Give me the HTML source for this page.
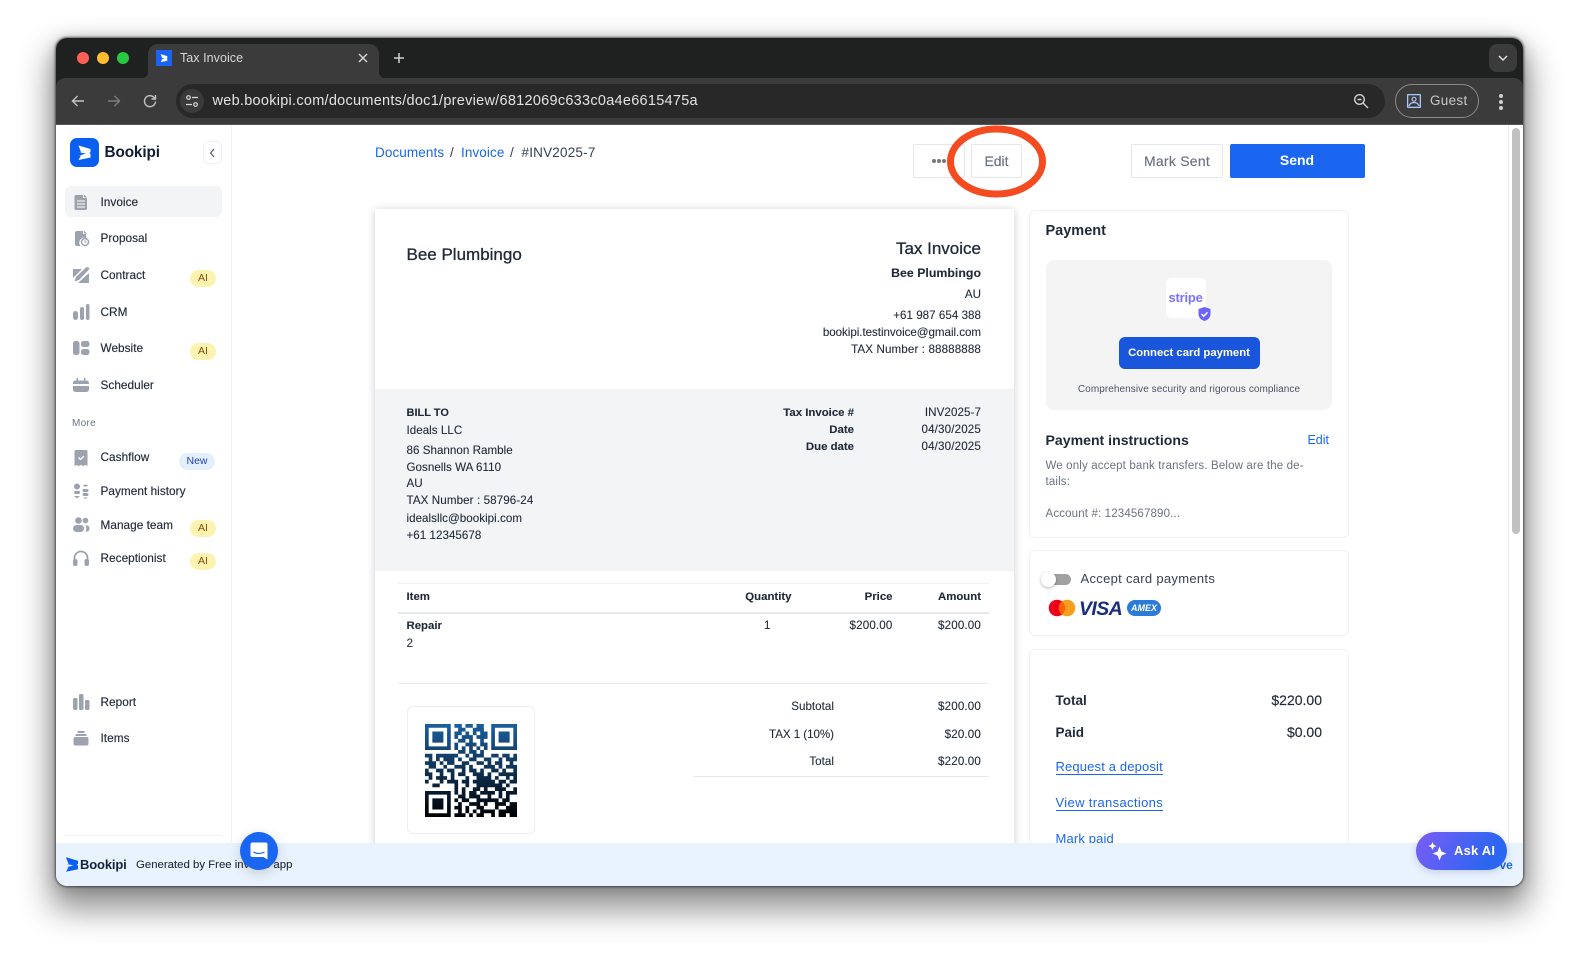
<!DOCTYPE html>
<html><head><meta charset="utf-8"><title>Tax Invoice</title>
<style>
*{box-sizing:border-box}
html,body{margin:0;padding:0;width:1579px;height:960px;overflow:hidden;background:#fff;font-family:"Liberation Sans",sans-serif}
.a{position:absolute}
.t{position:absolute;white-space:nowrap;line-height:20px;height:20px}
.win{position:absolute;left:56px;top:38px;width:1467px;height:848px;border-radius:11px;background:#fff;box-shadow:0 0 2px 1px rgba(0,0,0,.55),0 18px 32px 6px rgba(0,0,0,.42),0 2px 16px rgba(0,0,0,.2)}
#v{position:absolute;left:0;top:0;width:1579px;height:960px;overflow:hidden}
.n{font-size:11.8px;color:#1f2937;left:100.5px;letter-spacing:.03px;-webkit-text-stroke:.15px #1f2937}
.ic{position:absolute;left:72px;width:18px;height:18px;fill:#9ca3af}
.bd{position:absolute;height:17px;border-radius:9px;font-size:10.5px;line-height:17px;text-align:center}
.ai{left:190px;width:26px;background:#fdf3b0;color:#854d0e}
.p{font-size:11.6px;color:#1f2937;letter-spacing:.03px;-webkit-text-stroke:.1px #1f2937;margin-top:.8px}
.b{font-size:11.4px;font-weight:700;letter-spacing:0}
.ra{text-align:right}
.btn{position:absolute;border:1px solid #e5e7eb;border-radius:2px;background:#fff;color:#6b7280;font-size:14px;text-align:center;line-height:33px;-webkit-text-stroke:.15px #6b7280}
.card{position:absolute;left:1029px;width:320px;background:#fff;border:1px solid #f0f1f3;border-radius:6px}
.lnk{font-size:13px;color:#1a66f0;letter-spacing:.15px;border-bottom:1px solid #1a66f0;height:16px;line-height:15px}
.m{font-size:11.5px;color:#6b7280;letter-spacing:.15px}
</style></head><body>
<div id="v">
<div class="win"></div>

<!-- browser chrome -->
<div class="a" style="left:56px;top:38px;width:1467px;height:60px;background:#1f2020;border-radius:11px 11px 0 0"></div>
<div class="a" style="left:56px;top:78px;width:1467px;height:47px;background:#3b3b3b;border-radius:9px 9px 0 0;border-bottom:1px solid #555"></div>
<div class="a" style="left:148px;top:44px;width:231px;height:36px;background:#3b3b3b;border-radius:10px 10px 0 0"></div>
<svg class="a" style="left:139px;top:69px" width="10" height="10" viewBox="0 0 10 10"><path d="M0 10C6 10 10 6 10 0V10z" fill="#3b3b3b"/></svg>
<svg class="a" style="left:378px;top:69px" width="10" height="10" viewBox="0 0 10 10"><path d="M10 10C4 10 0 6 0 0V10z" fill="#3b3b3b"/></svg>
<div class="a" style="left:77px;top:52px;width:12px;height:12px;border-radius:50%;background:#ff5f57"></div>
<div class="a" style="left:97px;top:52px;width:12px;height:12px;border-radius:50%;background:#febc2e"></div>
<div class="a" style="left:117px;top:52px;width:12px;height:12px;border-radius:50%;background:#28c840"></div>
<svg class="a" style="left:156px;top:50px" width="16" height="16" viewBox="0 0 29 29"><rect width="29" height="29" fill="#1b63f5"/><path d="M8.500 7.500L20.500 11V14.300L19 15L20.500 15.700V19.500L8.500 22L11 17.500H9L16 15.600 9 14.200H11Z" fill="#fff"/></svg>
<div class="t" style="left:180px;top:48px;font-size:12.5px;color:#d8d8d8;letter-spacing:.05px">Tax Invoice</div>
<svg class="a" style="left:357px;top:52px" width="12" height="12" viewBox="0 0 12 12"><path d="M2 2l8 8M10 2l-8 8" stroke="#d8d8d8" stroke-width="1.400"/></svg>
<svg class="a" style="left:393px;top:52px" width="12" height="12" viewBox="0 0 12 12"><path d="M6 1v10M1 6h10" stroke="#d0d0d0" stroke-width="1.500"/></svg>
<div class="a" style="left:1489px;top:44px;width:28px;height:28px;border-radius:8px;background:#3b3b3b"></div>
<svg class="a" style="left:1497px;top:53px" width="12" height="10" viewBox="0 0 12 10"><path d="M2 3l4 4 4-4" fill="none" stroke="#e0e0e0" stroke-width="1.500"/></svg>
<svg class="a" style="left:70px;top:93px" width="16" height="16" viewBox="0 0 16 16"><path d="M14 8H2.500M7.500 3l-5 5 5 5" fill="none" stroke="#c4c4c4" stroke-width="1.400"/></svg>
<svg class="a" style="left:106px;top:93px" width="16" height="16" viewBox="0 0 16 16"><path d="M2 8h11.500M8.500 3l5 5-5 5" fill="none" stroke="#7d7d7d" stroke-width="1.400"/></svg>
<svg class="a" style="left:142px;top:93px" width="16" height="16" viewBox="0 0 16 16"><path d="M13.500 8.500a5.500 5.500 0 1 1-1.700-4.300L13.500 6M13.500 2v4h-4" fill="none" stroke="#c4c4c4" stroke-width="1.400"/></svg>
<div class="a" style="left:176px;top:84px;width:1209px;height:34px;border-radius:17px;background:#282828"></div>
<div class="a" style="left:180px;top:89px;width:24px;height:24px;border-radius:50%;background:#3b3b3b"></div>
<svg class="a" style="left:185px;top:94px" width="14" height="14" viewBox="0 0 14 14"><g fill="none" stroke="#d8d8d8" stroke-width="1.200"><circle cx="3.500" cy="3.500" r="1.800"/><path d="M7 3.500h6M1 10.500h6"/><circle cx="10.500" cy="10.500" r="1.800"/></g></svg>
<div class="t" style="left:212.500px;top:91px;font-size:14.500px;color:#e3e3e3;letter-spacing:.27px">web.bookipi.com/documents/doc1/preview/6812069c633c0a4e6615475a</div>
<svg class="a" style="left:1353px;top:93px" width="16" height="16" viewBox="0 0 16 16"><g fill="none" stroke="#d0d0d0" stroke-width="1.400"><circle cx="6.500" cy="6.500" r="4.800"/><path d="M10 10l5 5M4.500 6.500h4"/></g></svg>
<div class="a" style="left:1394.500px;top:84px;width:84px;height:34px;border-radius:17px;border:1px solid #8a8a8a"></div>
<svg class="a" style="left:1406px;top:93px" width="16" height="16" viewBox="0 0 16 16"><rect x="1" y="1" width="14" height="14" fill="#a8c7fa" rx="1"/><rect x="2.300" y="2.300" width="11.400" height="11.400" fill="#3b3b3b"/><circle cx="8" cy="6.200" r="2" fill="none" stroke="#a8c7fa" stroke-width="1.200"/><path d="M3 13c1-3 3-3.500 5-3.500s4 .5 5 3.500" fill="none" stroke="#a8c7fa" stroke-width="1.200"/></svg>
<div class="t" style="left:1430px;top:91px;font-size:13.500px;color:#c8c8c8;letter-spacing:.3px">Guest</div>
<div class="a" style="left:1499px;top:94px;width:4px;height:4px;border-radius:50%;background:#d0d0d0;box-shadow:0 6px 0 #d0d0d0,0 12px 0 #d0d0d0"></div>

<!-- sidebar -->
<div class="a" style="left:231px;top:125px;width:1px;height:718px;background:#eef0f2"></div>
<svg class="a" style="left:69.500px;top:138px" width="29" height="29" viewBox="0 0 29 29"><rect width="29" height="29" rx="7" fill="#0a5ff0"/><path d="M8.500 7.500L20.500 11V14.300L19 15L20.500 15.700V19.500L8.500 22L11 17.500H9L16 15.600 9 14.200H11Z" fill="#fff"/></svg>
<div class="t" style="left:104.500px;top:143px;font-size:15.300px;font-weight:700;color:#101c33;letter-spacing:-.1px">Bookipi</div>
<div class="a" style="left:203px;top:141px;width:19px;height:23px;border:1px solid #f1f1f3;border-radius:5px"></div>
<svg class="a" style="left:208px;top:148px" width="9" height="10" viewBox="0 0 9 10"><path d="M6 1l-3.500 4 3.500 4" fill="none" stroke="#4b5563" stroke-width="1.100"/></svg>
<div class="a" style="left:65px;top:186px;width:157px;height:31px;border-radius:6px;background:#f3f4f6"></div>

<svg class="ic" style="top:192.500px" viewBox="0 0 18 18"><path d="M4 2h7v3h4v10.500a1.500 1.500 0 0 1-1.500 1.500h-9.500a1.500 1.500 0 0 1-1.500-1.500V3.500A1.500 1.500 0 0 1 4 2z"/><path d="M12 1.500l3 3h-3z"/><path d="M5 8h8M5 11h8M5 14h8" stroke="#fff" stroke-width="1"/></svg>
<div class="t n" style="top:191.500px">Invoice</div>
<svg class="ic" style="top:229px" viewBox="0 0 18 18"><path d="M5 2h6v3h3v4a5 5 0 0 0-5.500 8H5a2 2 0 0 1-2-2V4a2 2 0 0 1 2-2z"/><path d="M12 1.500l3 3h-3z"/><circle cx="13" cy="13" r="3.500" fill="none" stroke="#9ca3af" stroke-width="1.500"/><path d="M13 11v2h1.500" fill="none" stroke="#9ca3af" stroke-width="1"/></svg>
<div class="t n" style="top:228px">Proposal</div>
<svg class="ic" style="top:266px" viewBox="0 0 18 18"><path d="M1 3h9L1 12zM16.500 1.500a1.500 1.500 0 0 1 .5 2L7 14l-4.500 1.500L4 11 14.500 1z"/><path d="M17 7v10H6z"/></svg>
<div class="t n" style="top:265px">Contract</div>
<div class="bd ai" style="top:270px">AI</div>
<svg class="ic" style="top:303px" viewBox="0 0 18 18"><rect x="1" y="8" width="5" height="9" rx="2.500"/><rect x="8" y="4" width="4" height="13" rx="2"/><rect x="14" y="1" width="3.500" height="16" rx="1.700"/></svg>
<div class="t n" style="top:302px">CRM</div>
<svg class="ic" style="top:339px" viewBox="0 0 18 18"><rect x="1" y="2" width="6.500" height="14" rx="2.500"/><rect x="9" y="2" width="8.500" height="6" rx="2.500"/><rect x="9" y="10" width="8.500" height="6" rx="2.500"/></svg>
<div class="t n" style="top:338px">Website</div>
<div class="bd ai" style="top:343px">AI</div>
<svg class="ic" style="top:375.500px" viewBox="0 0 18 18"><path d="M3.500 4.500h11A2.500 2.500 0 0 1 17 7v1H1V7a2.500 2.500 0 0 1 2.500-2.500zM1 10h16v3.500a2.500 2.500 0 0 1-2.500 2.500h-11A2.500 2.500 0 0 1 1 13.500z"/><rect x="4.500" y="2" width="1.500" height="3"/><rect x="12" y="2" width="1.500" height="3"/></svg>
<div class="t n" style="top:375px">Scheduler</div>
<div class="t" style="left:72px;top:413.500px;font-size:10px;color:#6b7280;letter-spacing:.3px">More</div>
<svg class="ic" style="top:449px" viewBox="0 0 18 18"><path d="M4 1h10a1.500 1.500 0 0 1 1.500 1.500V17l-2-1-2 1-2.500-1-2.500 1-2-1-2 1V2.500A1.500 1.500 0 0 1 4 1z"/><path d="M6.500 8.500l2 2 3.500-3.500" fill="none" stroke="#fff" stroke-width="1.300"/></svg>
<div class="t n" style="top:447px">Cashflow</div>
<div class="bd" style="left:179px;top:453px;width:36px;background:#e3effd;color:#1e40af">New</div>
<svg class="ic" style="top:482px" viewBox="0 0 18 18"><circle cx="5" cy="4.500" r="3"/><rect x="2" y="9" width="6" height="3" rx="1.500"/><path d="M2 14h6l-3 2.500z"/><rect x="10.500" y="7" width="6" height="3" rx="1.500"/><rect x="10.500" y="11" width="6" height="3" rx="1.500"/><path d="M11 3.500a3 2 0 0 1 5 0l-1 1h-3zM11 15.500h5l-2.500 1.500z"/></svg>
<div class="t n" style="top:481px">Payment history</div>
<svg class="ic" style="top:516px" viewBox="0 0 18 18"><circle cx="6.500" cy="4.500" r="3.300"/><circle cx="13.500" cy="4.500" r="2.800"/><rect x="1" y="9" width="11" height="7" rx="3.500"/><path d="M13.500 9.500a3 3 0 0 1 4 3 3 3 0 0 1-4 3 6 6 0 0 0 0-6z"/></svg>
<div class="t n" style="top:515px">Manage team</div>
<div class="bd ai" style="top:519.500px">AI</div>
<svg class="ic" style="top:549px" viewBox="0 0 18 18"><path d="M2.500 11V9a6.500 6.500 0 0 1 13 0v2" fill="none" stroke="#9ca3af" stroke-width="1.800"/><rect x="1" y="10" width="4.500" height="7" rx="2"/><rect x="12.500" y="10" width="4.500" height="7" rx="2"/></svg>
<div class="t n" style="top:548px">Receptionist</div>
<div class="bd ai" style="top:552.500px">AI</div>
<svg class="ic" style="top:693px" viewBox="0 0 18 18"><rect x="1" y="5" width="4.500" height="12" rx="1.500"/><rect x="7" y="1" width="4.500" height="16" rx="1.500"/><rect x="13" y="7" width="4.500" height="10" rx="1.500"/></svg>
<div class="t n" style="top:692px">Report</div>
<svg class="ic" style="top:729px" viewBox="0 0 18 18"><rect x="5.500" y="2" width="7" height="2" rx=".5"/><rect x="3.500" y="5" width="11" height="2" rx=".5"/><rect x="1.500" y="8" width="15" height="8.500" rx="2"/></svg>
<div class="t n" style="top:728px">Items</div>
<div class="a" style="left:65px;top:834.500px;width:157px;height:1px;background:#f1f2f4"></div>

<!-- header -->
<div class="t" style="left:375px;top:143px;font-size:13.500px;color:#1a66f0;letter-spacing:.1px">Documents</div>
<div class="t" style="left:450px;top:143px;font-size:13.500px;color:#374151">/</div>
<div class="t" style="left:461px;top:143px;font-size:13.500px;color:#1a66f0;letter-spacing:.1px">Invoice</div>
<div class="t" style="left:510px;top:143px;font-size:13.500px;color:#374151">/</div>
<div class="t" style="left:521.500px;top:143px;font-size:13.500px;color:#374151;letter-spacing:.2px">#INV2025-7</div>
<div class="btn" style="left:913px;top:144px;width:52px;height:34px"></div>
<div class="a" style="left:932px;top:159px;width:4px;height:4px;border-radius:50%;background:#777;box-shadow:5px 0 0 #777,10px 0 0 #777"></div>
<div class="btn" style="left:971px;top:144px;width:51px;height:34px">Edit</div>
<svg class="a" style="left:940px;top:120px" width="112" height="84" viewBox="0 0 112 84"><ellipse cx="56.500" cy="41.500" rx="46" ry="32.500" fill="none" stroke="#f54b20" stroke-width="7"/></svg>
<div class="btn" style="left:1131px;top:144px;width:92px;height:34px;letter-spacing:.25px">Mark Sent</div>
<div class="a" style="left:1229.500px;top:144px;width:135px;height:34px;background:#1a66f0;border-radius:2px;color:#fff;font-size:14px;font-weight:700;text-align:center;line-height:33px">Send</div>

<!-- invoice paper -->
<div class="a" style="left:375px;top:209px;width:638.500px;height:640px;background:#fff;box-shadow:0 1px 8px rgba(0,0,0,.2)"></div>
<div class="t" style="left:406.500px;top:245px;font-size:17px;color:#1f2937;-webkit-text-stroke:.3px #1f2937">Bee Plumbingo</div>
<div class="t ra" style="right:598px;top:239px;font-size:17px;color:#1f2937;-webkit-text-stroke:.3px #1f2937">Tax Invoice</div>
<div class="t ra p" style="right:598px;top:262.500px;font-size:12.300px;font-weight:700">Bee Plumbingo</div>
<div class="t ra p" style="right:598px;top:284px">AU</div>
<div class="t ra p" style="right:598px;top:305px">+61 987 654 388</div>
<div class="t ra p" style="right:598px;top:322.500px;letter-spacing:-.04px">bookipi.testinvoice@gmail.com</div>
<div class="t ra p" style="right:598px;top:339.500px;letter-spacing:.12px">TAX Number : 88888888</div>
<div class="a" style="left:375px;top:388.500px;width:638.500px;height:182.500px;background:#f3f4f6"></div>
<div class="t p b" style="left:406.500px;top:402.200px;font-size:11px">BILL TO</div>
<div class="t p" style="left:406.500px;top:420.200px">Ideals LLC</div>
<div class="t p" style="left:406.500px;top:440px">86 Shannon Ramble</div>
<div class="t p" style="left:406.500px;top:457px">Gosnells WA 6110</div>
<div class="t p" style="left:406.500px;top:473.500px">AU</div>
<div class="t p" style="left:406.500px;top:490.500px;letter-spacing:.1px">TAX Number : 58796-24</div>
<div class="t p" style="left:406.500px;top:508.500px">idealsllc@bookipi.com</div>
<div class="t p" style="left:406.500px;top:525.500px">+61 12345678</div>
<div class="t ra p b" style="right:725px;top:402.200px">Tax Invoice #</div>
<div class="t ra p b" style="right:725px;top:419.500px">Date</div>
<div class="t ra p b" style="right:725px;top:436.500px">Due date</div>
<div class="t ra p" style="right:598px;top:402.200px;letter-spacing:.08px">INV2025-7</div>
<div class="t ra p" style="right:598px;top:419.500px;letter-spacing:.15px">04/30/2025</div>
<div class="t ra p" style="right:598px;top:436.500px;letter-spacing:.15px">04/30/2025</div>
<div class="a" style="left:398px;top:583px;width:591px;height:1px;background:#f0f1f3"></div>
<div class="a" style="left:398px;top:611.500px;width:591px;height:2px;background:#e5e7eb"></div>
<div class="t p b" style="left:406.500px;top:586.700px">Item</div>
<div class="t ra p b" style="right:787.500px;top:586.700px">Quantity</div>
<div class="t ra p b" style="right:686.500px;top:586.700px">Price</div>
<div class="t ra p b" style="right:598px;top:586.700px">Amount</div>
<div class="t p b" style="left:406.500px;top:615.500px">Repair</div>
<div class="t p" style="left:406.500px;top:633px">2</div>
<div class="t p" style="left:764px;top:615.500px">1</div>
<div class="t ra p" style="right:686.500px;top:615.500px;letter-spacing:.15px">$200.00</div>
<div class="t ra p" style="right:598px;top:615.500px;letter-spacing:.15px">$200.00</div>
<div class="a" style="left:398px;top:683px;width:591px;height:1px;background:#e9ebee"></div>
<div class="a" style="left:406.500px;top:706px;width:128px;height:127.500px;border:1px solid #eceef1;border-radius:6px;background:#fff"></div>
<svg class="a" style="left:425px;top:724px" width="92" height="93" viewBox="0 0 25 25" preserveAspectRatio="none"><defs><linearGradient id="q" gradientUnits="userSpaceOnUse" x1="0" y1="0" x2="0" y2="25"><stop offset="0" stop-color="#1c5f9c"/><stop offset=".55" stop-color="#0d2c4a"/><stop offset="1" stop-color="#000"/></linearGradient></defs><path fill="none" stroke="url(#q)" stroke-width="1" d="M0 .5h7M8 .5h2M11 .5h2M14 .5h2M18 .5h7M0 1.500h1M6 1.500h1M9 1.500h2M13 1.500h3M18 1.500h1M24 1.500h1M0 2.500h1M2 2.500h3M6 2.500h1M8 2.500h2M11 2.500h1M13 2.500h1M15 2.500h2M18 2.500h1M20 2.500h3M24 2.500h1M0 3.500h1M2 3.500h3M6 3.500h1M8 3.500h1M10 3.500h3M14 3.500h3M18 3.500h1M20 3.500h3M24 3.500h1M0 4.500h1M2 4.500h3M6 4.500h1M9 4.500h2M12 4.500h1M15 4.500h1M18 4.500h1M20 4.500h3M24 4.500h1M0 5.500h1M6 5.500h1M8 5.500h1M11 5.500h3M15 5.500h2M18 5.500h1M24 5.500h1M0 6.500h7M8 6.500h1M10 6.500h1M12 6.500h1M14 6.500h1M16 6.500h1M18 6.500h7M9 7.500h2M12 7.500h2M15 7.500h1M0 8.500h2M3 8.500h4M7 8.500h2M11 8.500h1M13 8.500h3M18 8.500h2M21 8.500h2M24 8.500h1M1 9.500h1M3 9.500h1M5 9.500h3M9 9.500h1M12 9.500h2M16 9.500h2M20 9.500h1M22 9.500h3M0 10.500h3M4 10.500h1M6 10.500h2M10 10.500h2M14 10.500h2M17 10.500h1M19 10.500h2M23 10.500h1M1 11.500h2M5 11.500h1M8 11.500h3M12 11.500h1M16 11.500h3M20 11.500h1M22 11.500h3M0 12.500h1M3 12.500h2M6 12.500h2M10 12.500h1M12 12.500h2M15 12.500h1M18 12.500h2M21 12.500h1M24 12.500h1M0 13.500h2M4 13.500h1M7 13.500h1M9 13.500h2M13 13.500h3M17 13.500h1M20 13.500h3M23 13.500h2M1 14.500h1M3 14.500h3M7 14.500h1M11 14.500h1M14 14.500h4M19 14.500h1M22 14.500h1M24 14.500h1M0 15.500h1M4 15.500h1M6 15.500h3M10 15.500h2M13 15.500h6M20 15.500h2M23 15.500h2M2 16.500h2M8 16.500h1M11 16.500h1M14 16.500h7M22 16.500h1M8 17.500h1M10 17.500h1M13 17.500h2M16 17.500h1M19 17.500h3M24 17.500h1M0 18.500h7M8 18.500h1M10 18.500h1M12 18.500h2M15 18.500h4M20 18.500h1M22 18.500h3M0 19.500h1M6 19.500h1M9 19.500h2M12 19.500h3M17 19.500h1M20 19.500h1M22 19.500h1M0 20.500h1M2 20.500h3M6 20.500h1M8 20.500h1M10 20.500h2M14 20.500h6M21 20.500h2M0 21.500h1M2 21.500h3M6 21.500h1M9 21.500h1M12 21.500h3M16 21.500h1M19 21.500h3M23 21.500h2M0 22.500h1M2 22.500h3M6 22.500h1M8 22.500h2M11 22.500h1M14 22.500h2M19 22.500h1M22 22.500h3M0 23.500h1M6 23.500h1M9 23.500h1M11 23.500h1M13 23.500h1M15 23.500h4M20 23.500h5M0 24.500h7M8 24.500h3M12 24.500h1M14 24.500h2M18 24.500h1M20 24.500h2M23 24.500h2"/></svg>
<div class="t ra p" style="right:745px;top:696.500px">Subtotal</div>
<div class="t ra p" style="right:745px;top:724.500px;letter-spacing:-.05px">TAX 1 (10%)</div>
<div class="t ra p" style="right:745px;top:751.500px">Total</div>
<div class="t ra p" style="right:598px;top:696.500px;letter-spacing:.15px">$200.00</div>
<div class="t ra p" style="right:598px;top:724.500px;letter-spacing:.15px">$20.00</div>
<div class="t ra p" style="right:598px;top:751.500px;letter-spacing:.15px">$220.00</div>
<div class="a" style="left:694px;top:776px;width:295px;height:1px;background:#e5e7eb"></div>

<!-- right cards -->
<div class="card" style="top:209.500px;height:328px"></div>
<div class="t" style="left:1045.500px;top:221px;font-size:14.500px;font-weight:700;color:#1f2937">Payment</div>
<div class="a" style="left:1046px;top:260px;width:286px;height:150px;background:#f4f4f5;border-radius:8px"></div>
<div class="a" style="left:1166px;top:278px;width:40px;height:40px;background:#fff;border-radius:5px"></div>
<div class="t" style="left:1168.500px;top:288px;font-size:13px;font-weight:700;color:#7a73ff;letter-spacing:-.2px">stripe</div>
<svg class="a" style="left:1197px;top:306px" width="15" height="16" viewBox="0 0 15 16"><path d="M7.500 1l6 2v5c0 3.500-2.500 6-6 7-3.500-1-6-3.500-6-7V3z" fill="#6d63f7"/><path d="M4.500 8l2.200 2.200 3.800-3.800" fill="none" stroke="#fff" stroke-width="1.500"/></svg>
<div class="a" style="left:1118.500px;top:336.500px;width:141px;height:32px;background:#1a56db;border-radius:6px;color:#fff;font-size:11.300px;font-weight:700;text-align:center;line-height:32px">Connect card payment</div>
<div class="t" style="left:1046px;width:286px;top:379.500px;font-size:10px;color:#4b5563;text-align:center;letter-spacing:.07px">Comprehensive security and rigorous compliance</div>
<div class="t" style="left:1045.500px;top:430px;font-size:14.100px;font-weight:700;color:#1f2937">Payment instructions</div>
<div class="t ra" style="right:250px;top:430px;font-size:12.500px;color:#1a66f0">Edit</div>
<div class="t m" style="left:1045.500px;top:456px">We only accept bank transfers. Below are the de-</div>
<div class="t m" style="left:1045.500px;top:472px">tails:</div>
<div class="t m" style="left:1045.500px;top:503.500px">Account #: 1234567890...</div>
<div class="card" style="top:550px;height:85.500px"></div>
<div class="a" style="left:1043px;top:574px;width:28px;height:11px;border-radius:6px;background:#a1a1a1"></div>
<div class="a" style="left:1041px;top:572px;width:15px;height:15px;border-radius:50%;background:#fff;box-shadow:0 1px 3px rgba(0,0,0,.3)"></div>
<div class="t" style="left:1080.500px;top:569px;font-size:13px;color:#374151;letter-spacing:.3px">Accept card payments</div>
<svg class="a" style="left:1048px;top:599px" width="28" height="18" viewBox="0 0 28 18"><circle cx="9" cy="9" r="8.300" fill="#eb001b"/><circle cx="19" cy="9" r="8.300" fill="#f79e1b"/><path d="M14 2.400a8.300 8.300 0 0 1 0 13.200 8.300 8.300 0 0 1 0-13.200z" fill="#ff5f00"/></svg>
<div class="t" style="left:1079px;top:598.500px;font-size:19.500px;font-weight:700;font-style:italic;color:#1a2e7c;letter-spacing:-.6px">VISA</div>
<div class="a" style="left:1127px;top:600px;width:34px;height:16px;border-radius:8px;background:#2b7bd8;color:#fff;font-size:9px;font-weight:700;font-style:italic;text-align:center;line-height:16px">AMEX</div>
<div class="card" style="top:648.500px;height:200px"></div>
<div class="t" style="left:1055.500px;top:690.500px;font-size:13.500px;font-weight:700;color:#1f2937">Total</div>
<div class="t ra" style="right:257px;top:690px;font-size:14px;color:#1f2937;-webkit-text-stroke:.15px #1f2937">$220.00</div>
<div class="t" style="left:1055.500px;top:722.500px;font-size:13.500px;font-weight:700;color:#1f2937">Paid</div>
<div class="t ra" style="right:257px;top:722px;font-size:14px;color:#1f2937;-webkit-text-stroke:.15px #1f2937">$0.00</div>
<div class="t lnk" style="left:1055.500px;top:758.500px">Request a deposit</div>
<div class="t lnk" style="left:1055.500px;top:794.500px;letter-spacing:.35px">View transactions</div>
<div class="t lnk" style="left:1055.500px;top:831px">Mark paid</div>

<!-- scrollbar -->
<div class="a" style="left:1508px;top:125px;width:15px;height:718px;background:#fff;border-left:1px solid #ececec"></div>
<div class="a" style="left:1512px;top:128px;width:8px;height:406px;background:#c1c1c1;border-radius:4px"></div>

<!-- bottom bar -->
<div class="a" style="left:56px;top:843px;width:1467px;height:43px;background:#e9f3fd;border-radius:0 0 11px 11px"></div>
<svg class="a" style="left:65.500px;top:856.500px" width="12" height="15" viewBox="8.500 7.500 12 14.500"><path d="M8.500 7.500L20.500 11V14.300L19 15L20.500 15.700V19.500L8.500 22L11 17.500H9L16 15.600 9 14.200H11Z" fill="#0a5ff0"/></svg>
<div class="t" style="left:80px;top:854.500px;font-size:13px;font-weight:700;color:#13233f;letter-spacing:-.15px">Bookipi</div>
<div class="t" style="left:136px;top:855px;font-size:11.400px;color:#1f2937;-webkit-text-stroke:.1px #1f2937">Generated by Free invoice app</div>
<div class="t" style="left:1499.500px;top:855px;font-size:12px;font-weight:700;color:#1a66f0">ve</div>
<div class="a" style="left:240px;top:832px;width:38px;height:38px;border-radius:50%;background:#1a66f0;box-shadow:0 3px 12px rgba(0,0,0,.16)"></div>
<svg class="a" style="left:249px;top:841px" width="20" height="20" viewBox="0 0 20 20"><path d="M3.500 1.500h13a2 2 0 0 1 2 2v15l-4-2.500h-11a2 2 0 0 1-2-2v-10.500a2 2 0 0 1 2-2z" fill="#fff"/><path d="M4.500 11c3.500 2 7.500 2 11 0" fill="none" stroke="#1a66f0" stroke-width="1.200"/></svg>
<div class="a" style="left:1416px;top:832px;width:91px;height:38px;border-radius:19px;background:linear-gradient(120deg,#7d5cf6,#2a66f0 80%);box-shadow:0 2px 8px rgba(40,60,160,.2)"></div>
<svg class="a" style="left:1428px;top:841px" width="20" height="20" viewBox="0 0 20 20"><path d="M11.500 5.500l2 5 5 2-5 2-2 5-2-5-5-2 5-2zM4.500 1l1.200 2.800 2.800 1.200-2.800 1.200-1.200 2.800-1.200-2.800-2.800-1.200 2.800-1.200z" fill="#fff"/></svg>
<div class="t" style="left:1454px;top:841px;font-size:13px;font-weight:700;color:#fff;letter-spacing:.2px">Ask AI</div>
</div>
</body></html>
